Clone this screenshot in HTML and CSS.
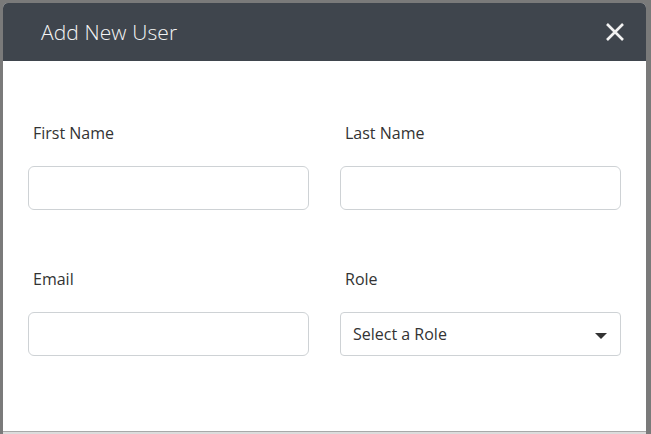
FILE: index.html
```html
<!DOCTYPE html>
<html>
<head>
<meta charset="utf-8">
<link rel="stylesheet" href="styles.css">
</head>
<body>
<div class="modal">
  <div class="modal-header">
    <h1 class="modal-title">Add New User</h1>
    <button class="close" aria-label="Close">
      <svg width="20" height="20" viewBox="0 0 20 20"><path d="M2 2 L18 18 M18 2 L2 18" stroke="#f2f2f2" stroke-width="2.6" stroke-linecap="butt" fill="none"/></svg>
    </button>
  </div>
  <div class="modal-body">
    <div class="grid">
      <div class="field">
        <label class="label">First Name</label>
        <input class="input" type="text">
      </div>
      <div class="field">
        <label class="label">Last Name</label>
        <input class="input" type="text">
      </div>
      <div class="field">
        <label class="label">Email</label>
        <input class="input" type="text">
      </div>
      <div class="field">
        <label class="label">Role</label>
        <div class="select">
          <span>Select a Role</span>
          <span class="caret"></span>
        </div>
      </div>
    </div>
  </div>
  <div class="modal-footer"></div>
</div>
</body>
</html>
```

FILE: styles.css
```css
html, body {
  margin: 0;
  padding: 0;
}
body {
  background: #7a7a7a;
  width: 651px;
  height: 434px;
  overflow: hidden;
  font-family: "Open Sans", "Liberation Sans", sans-serif;
  color: #333;
  padding: 3px 5px 0 3px;
  box-sizing: border-box;
}
.modal {
  width: 643px;
  background: #fff;
  border-radius: 5px 5px 0 0;
  overflow: hidden;
}
.modal-header {
  height: 58px;
  background: #3f454d;
  display: flex;
  align-items: center;
  justify-content: space-between;
  padding: 0 21px 0 38px;
  box-sizing: border-box;
}
.modal-title {
  margin: 0;
  font-size: 21px;
  font-weight: 300;
  color: #f4f4f4;
  letter-spacing: 0.1px;
}
.close {
  background: none;
  border: 0;
  padding: 0;
  width: 20px;
  height: 20px;
  display: block;
}
.close svg { display: block; }
.modal-body {
  padding: 61px 25px 0 25px;
  height: 370px;
  box-sizing: border-box;
}
.grid {
  display: grid;
  grid-template-columns: 281px 281px;
  column-gap: 31px;
  row-gap: 58px;
}
.field {
  display: flex;
  flex-direction: column;
}
.label {
  font-size: 16px;
  line-height: 22px;
  color: #333;
  padding-left: 5px;
  margin-bottom: 22px;
}
.input, .select {
  height: 44px;
  box-sizing: border-box;
  border: 1px solid #ced2d5;
  border-radius: 6px;
  background: #fff;
  margin: 0;
  font-family: inherit;
}
.select {
  border-radius: 4px;
  display: flex;
  align-items: center;
  justify-content: space-between;
  padding: 0 13px 0 12px;
  font-size: 16px;
  color: #333;
}
.caret {
  width: 0;
  height: 0;
  border-left: 6px solid transparent;
  border-right: 6px solid transparent;
  border-top: 6px solid #333;
  margin-top: 4px;
}
.modal-footer {
  height: 2px;
  border-top: 1px solid #a9a9a9;
  background: #dcdcdc;
}
```
